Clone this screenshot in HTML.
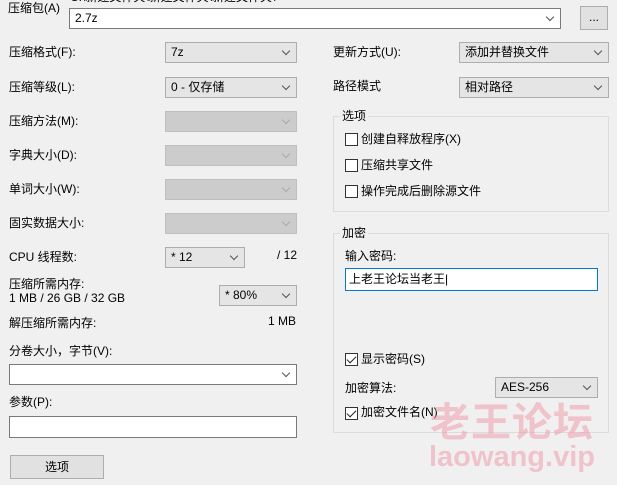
<!DOCTYPE html>
<html><head><meta charset="utf-8"><style>
*{box-sizing:border-box;margin:0;padding:0}
body{width:617px;height:485px;background:#f0f0f0;font:12px "Liberation Sans","Noto Sans CJK SC",sans-serif;color:#000;position:relative;overflow:hidden}
.a{position:absolute;white-space:nowrap;margin-top:-2px}
.cb{position:absolute;border:1px solid #adadad;background:#e5e5e5;padding-left:5px;line-height:18px}
.cb.w{background:#fff;border-color:#7a7a7a}
.cb.d{background:#cccccc;border-color:#bfbfbf}
.cb:after{content:"";position:absolute;right:7px;top:5px;width:5px;height:5px;border-right:1px solid #555;border-bottom:1px solid #555;transform:rotate(45deg)}
.cb.d:after{border-color:#aaa}
.grp{position:absolute;border:1px solid #dcdcdc}
.lg{position:absolute;background:#f0f0f0;padding:0 2px}
.ck{position:absolute;width:13px;height:13px;border:1px solid #333;background:#fff}
.ck.on:after{content:"";position:absolute;left:3px;top:0px;width:4px;height:8px;border-right:1.5px solid #222;border-bottom:1.5px solid #222;transform:rotate(45deg)}
.tb{position:absolute;background:#fff;border:1px solid #7a7a7a}
</style></head><body>
<div class="a" style="left:8px;top:1px">压缩包(A)</div>
<div class="a" style="left:70px;top:-10px">C:\新建文件夹\新建文件夹\新建文件夹\</div>
<div class="cb w" style="left:69px;top:8px;width:492px;height:21px">2.7z</div>
<div class="a" style="margin-top:0;left:580px;top:6px;width:28px;height:24px;border:1px solid #adadad;background:#e1e1e1;text-align:center;line-height:20px">...</div>

<div class="a" style="left:9px;top:45px">压缩格式(F):</div>
<div class="cb" style="left:165px;top:42px;width:132px;height:21px">7z</div>
<div class="a" style="left:9px;top:80px">压缩等级(L):</div>
<div class="cb" style="left:165px;top:77px;width:132px;height:21px">0 - 仅存储</div>
<div class="a" style="left:9px;top:114px">压缩方法(M):</div>
<div class="cb d" style="left:165px;top:111px;width:132px;height:21px"></div>
<div class="a" style="left:9px;top:148px">字典大小(D):</div>
<div class="cb d" style="left:165px;top:145px;width:132px;height:21px"></div>
<div class="a" style="left:9px;top:182px">单词大小(W):</div>
<div class="cb d" style="left:165px;top:179px;width:132px;height:21px"></div>
<div class="a" style="left:9px;top:216px">固实数据大小:</div>
<div class="cb d" style="left:165px;top:213px;width:132px;height:21px"></div>
<div class="a" style="left:9px;top:250px">CPU 线程数:</div>
<div class="cb" style="left:165px;top:247px;width:80px;height:21px">* 12</div>
<div class="a" style="left:277px;top:250px">/ 12</div>
<div class="a" style="left:9px;top:277px">压缩所需内存:</div>
<div class="a" style="left:9px;top:293px">1 MB / 26 GB / 32 GB</div>
<div class="cb" style="left:219px;top:285px;width:78px;height:21px">* 80%</div>
<div class="a" style="left:9px;top:316px">解压缩所需内存:</div>
<div class="a" style="left:268px;top:316px">1 MB</div>
<div class="a" style="left:9px;top:344px">分卷大小，字节(V):</div>
<div class="cb w" style="left:9px;top:364px;width:288px;height:21px"></div>
<div class="a" style="left:9px;top:395px">参数(P):</div>
<div class="tb" style="left:9px;top:416px;width:288px;height:22px"></div>
<div class="a" style="margin-top:0;left:10px;top:455px;width:94px;height:24px;border:1px solid #adadad;background:#e1e1e1;text-align:center;line-height:22px">选项</div>

<div class="a" style="left:333px;top:45px">更新方式(U):</div>
<div class="cb" style="left:459px;top:42px;width:150px;height:21px">添加并替换文件</div>
<div class="a" style="left:333px;top:79px">路径模式</div>
<div class="cb" style="left:459px;top:77px;width:150px;height:21px">相对路径</div>

<div class="grp" style="left:333px;top:116px;width:276px;height:96px"></div>
<div class="lg" style="left:340px;top:107px">选项</div>
<div class="ck" style="left:345px;top:133px"></div><div class="a" style="left:361px;top:132px">创建自释放程序(X)</div>
<div class="ck" style="left:345px;top:159px"></div><div class="a" style="left:361px;top:158px">压缩共享文件</div>
<div class="ck" style="left:345px;top:185px"></div><div class="a" style="left:361px;top:184px">操作完成后删除源文件</div>

<div class="grp" style="left:333px;top:233px;width:276px;height:200px"></div>
<div class="lg" style="left:340px;top:224px">加密</div>
<div class="a" style="left:345px;top:249px">输入密码:</div>
<div class="tb" style="left:345px;top:268px;width:253px;height:23px;border-color:#0078d7;padding-left:3px;line-height:20px">上老王论坛当老王|</div>
<div class="ck on" style="left:345px;top:353px"></div><div class="a" style="left:361px;top:352px">显示密码(S)</div>
<div class="a" style="left:345px;top:381px">加密算法:</div>
<div class="cb" style="left:495px;top:377px;width:103px;height:21px">AES-256</div>
<div class="ck on" style="left:345px;top:407px"></div><div class="a" style="left:361px;top:405px">加密文件名(N)</div>

<div class="a" style="left:430px;top:392px;font-size:40px;font-weight:bold;color:rgba(240,150,165,0.5);letter-spacing:1px">老王论坛</div>
<div class="a" style="left:429px;top:443px;font-size:29px;font-weight:bold;color:rgba(240,150,165,0.5)">laowang.vip</div>
</body></html>
